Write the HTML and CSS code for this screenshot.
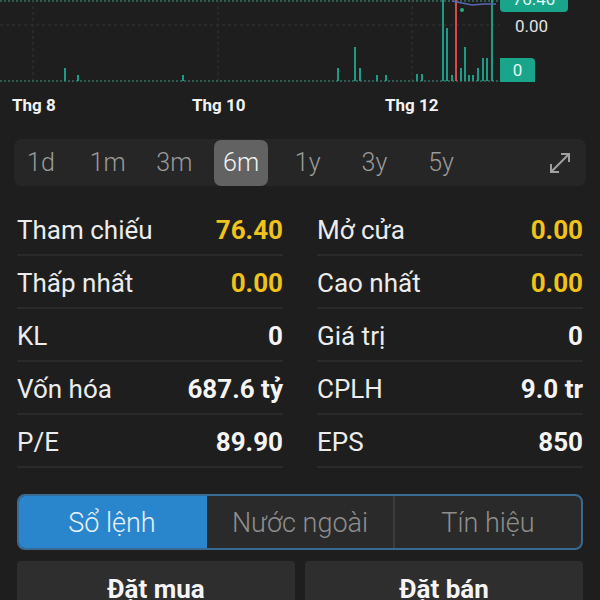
FILE: index.html
```html
<!DOCTYPE html>
<html lang="vi">
  <head>
    <meta charset="UTF-8" />
    <meta name="viewport" content="width=device-width, initial-scale=1.0" />
    <title>Chi tiết mã</title>
    <link rel="stylesheet" href="styles.css">
  </head>
  <body>
    <div class="chart">
      <svg class="chart-canvas" width="600" height="82" viewBox="0 0 600 82">
        <line class="grid-edge" x1="0" y1="1" x2="500" y2="1" />
        <line class="grid" x1="0" y1="25" x2="500" y2="25" />
        <line class="grid" x1="33" y1="0" x2="33" y2="81" />
        <line class="grid" x1="218" y1="0" x2="218" y2="81" />
        <line class="grid" x1="412" y1="0" x2="412" y2="81" />
        <line class="grid-edge" x1="0" y1="81" x2="500" y2="81" />
        <g class="bars">
          <rect x="64" y="68" width="2" height="13" />
          <rect x="77" y="75" width="2" height="6" />
          <rect x="182" y="75" width="2" height="6" />
          <rect x="337" y="68" width="2" height="13" />
          <rect x="354" y="47" width="2" height="34" />
          <rect x="359" y="68" width="2" height="13" />
          <rect x="376" y="75" width="2" height="6" />
          <rect x="385" y="75" width="2" height="6" />
          <rect x="416" y="74" width="2" height="7" />
          <rect x="421" y="74" width="2" height="7" />
          <rect x="442" y="0" width="2" height="81" />
          <rect x="446" y="28" width="2" height="53" />
          <rect x="451" y="75" width="2" height="6" />
          <rect x="460" y="68" width="2" height="13" />
          <rect x="464" y="47" width="2" height="34" />
          <rect x="468" y="75" width="2" height="6" />
          <rect x="472" y="75" width="2" height="6" />
          <rect x="477" y="68" width="2" height="13" />
          <rect x="482" y="58" width="2" height="23" />
          <rect x="486" y="58" width="2" height="23" />
          <rect x="491" y="0" width="2" height="81" />
        </g>
        <rect class="candle-down" x="455" y="0" width="2" height="81" />
        <polyline class="ma" points="452,1 462,3 472,5 484,4 496,4" />
        <circle class="dot" cx="462" cy="10" r="2" />
      </svg>
      <span class="price-tag price-top">76.40</span>
      <span class="price-plain">0.00</span>
      <span class="price-tag price-zero">0</span>
    </div>

    <div class="axis">
      <span class="tick" style="left: 12px">Thg 8</span>
      <span class="tick" style="left: 192px">Thg 10</span>
      <span class="tick" style="left: 385px">Thg 12</span>
    </div>

    <div class="range">
      <span class="range-item">1d</span>
      <span class="range-item">1m</span>
      <span class="range-item">3m</span>
      <span class="range-item active">6m</span>
      <span class="range-item">1y</span>
      <span class="range-item">3y</span>
      <span class="range-item">5y</span>
      <svg class="expand" width="24" height="24" viewBox="0 0 24 24">
        <path d="M3 21 L21 3 M13 3 H21 V11 M3 13 V21 H11" />
      </svg>
    </div>

    <div class="stats">
      <div class="stat-col">
        <div class="stat-row"><span class="stat-label">Tham chiếu</span><span class="stat-value yellow">76.40</span></div>
        <div class="stat-row"><span class="stat-label">Thấp nhất</span><span class="stat-value yellow">0.00</span></div>
        <div class="stat-row"><span class="stat-label">KL</span><span class="stat-value">0</span></div>
        <div class="stat-row"><span class="stat-label">Vốn hóa</span><span class="stat-value">687.6 tỷ</span></div>
        <div class="stat-row"><span class="stat-label">P/E</span><span class="stat-value">89.90</span></div>
      </div>
      <div class="stat-col">
        <div class="stat-row"><span class="stat-label">Mở cửa</span><span class="stat-value yellow">0.00</span></div>
        <div class="stat-row"><span class="stat-label">Cao nhất</span><span class="stat-value yellow">0.00</span></div>
        <div class="stat-row"><span class="stat-label">Giá trị</span><span class="stat-value">0</span></div>
        <div class="stat-row"><span class="stat-label">CPLH</span><span class="stat-value">9.0 tr</span></div>
        <div class="stat-row"><span class="stat-label">EPS</span><span class="stat-value">850</span></div>
      </div>
    </div>

    <div class="tabs">
      <div class="tab active">Sổ lệnh</div>
      <div class="tab">Nước ngoài</div>
      <div class="tab">Tín hiệu</div>
    </div>

    <div class="actions">
      <button class="action">Đặt mua</button>
      <button class="action">Đặt bán</button>
    </div>
  </body>
</html>
```

FILE: styles.css
```css
body {
  margin: 0;
  padding: 0;
  background-color: #1e1e1e;
  font-family: Roboto, "Liberation Sans", Arial, sans-serif;
  color: #ececec;
  width: 600px;
  height: 600px;
  overflow: hidden;
}
.chart {
  position: relative;
  height: 82px;
}
.chart-canvas {
  display: block;
}
.grid {
  stroke: #343434;
  stroke-width: 1;
  stroke-dasharray: 3 3;
}
.grid-edge {
  stroke: #2f5d54;
  stroke-width: 2;
  stroke-dasharray: 2 2;
}
.bars rect {
  fill: #1c9c84;
}
.candle-down {
  fill: #d9494a;
}
.ma {
  fill: none;
  stroke: #5668b4;
  stroke-width: 1.5;
}
.dot {
  fill: #22b27c;
}
.price-tag {
  position: absolute;
  left: 500px;
  background-color: #18a58a;
  color: #e4f7f2;
  font-size: 17px;
  text-align: center;
}
.price-top {
  top: -12px;
  width: 68px;
  height: 24px;
  line-height: 22px;
  border-radius: 0 0 4px 4px;
}
.price-zero {
  top: 58px;
  width: 35px;
  height: 24px;
  line-height: 24px;
  border-radius: 0 4px 0 0;
}
.price-plain {
  position: absolute;
  left: 515px;
  top: 15px;
  font-size: 17px;
  line-height: 22px;
  color: #e2e2e2;
}
.axis {
  position: relative;
  height: 44px;
}
.tick {
  position: absolute;
  top: 13px;
  font-size: 17px;
  line-height: 20px;
  font-weight: bold;
  color: #f2f2f2;
}
.range {
  display: flex;
  align-items: center;
  gap: 12.7px;
  height: 47px;
  margin: 13px 14px 0;
  background-color: #262626;
  border-radius: 8px;
}
.range-item {
  width: 54px;
  height: 46px;
  line-height: 46px;
  text-align: center;
  font-size: 25px;
  font-weight: 300;
  color: #9a9a9a;
  border-radius: 7px;
}
.range-item.active {
  background-color: #626262;
  color: #f4f4f4;
}
.expand {
  margin-left: auto;
  margin-right: 14px;
  fill: none;
  stroke: #a0a0a0;
  stroke-width: 2;
}
.stats {
  display: grid;
  grid-template-columns: 266px 266px;
  gap: 34px;
  margin: 17px 17px 0;
}
.stat-row {
  display: flex;
  justify-content: space-between;
  align-items: center;
  box-sizing: border-box;
  height: 53px;
  padding-top: 2px;
  border-bottom: 2px solid #2a2a2a;
  font-size: 26px;
}
.stat-label {
  color: #ececec;
}
.stat-value {
  font-weight: bold;
  color: #f4f4f4;
}
.stat-value.yellow {
  color: #f0c21c;
}
.tabs {
  display: flex;
  height: 52px;
  margin: 26px 17px 0;
  border: 2px solid #3a6a90;
  border-radius: 8px;
  overflow: hidden;
  background-color: #2a2a2a;
}
.tab {
  flex: 1;
  line-height: 54px;
  text-align: center;
  font-size: 27px;
  font-weight: 300;
  color: #8e8e8e;
}
.tab + .tab {
  border-left: 2px solid #3c3c3c;
}
.tab.active {
  background-color: #2a86cc;
  color: #e6f1fa;
}
.tab.active + .tab {
  border-left-color: #2a86cc;
}
.actions {
  display: flex;
  gap: 10px;
  margin: 11px 17px 0;
}
.action {
  flex: 1;
  height: 56px;
  border: none;
  border-radius: 3px 3px 0 0;
  background-color: #2e2e2e;
  color: #f4f4f4;
  font-family: inherit;
  font-size: 26px;
  font-weight: bold;
  padding: 0;
}
```
